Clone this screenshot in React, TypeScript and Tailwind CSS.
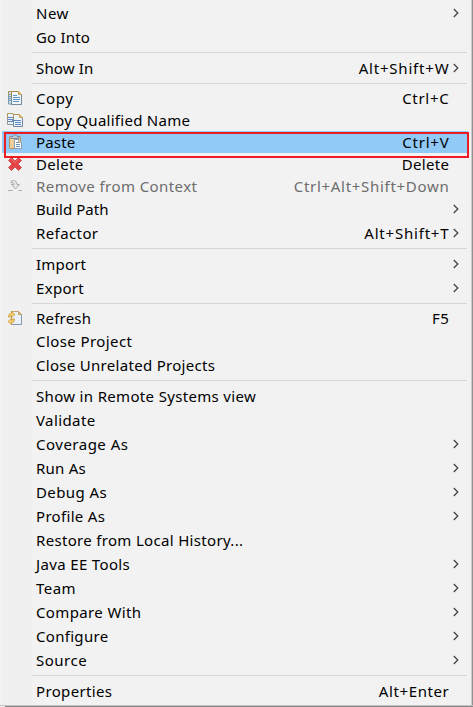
import type { ReactNode } from "react";

type Item = {
  label?: string;
  keys?: string;
  // letter spacing of the label and of the shortcut, in pixels
  ls?: number;
  ks?: number;
  sub?: boolean;
  icon?: ReactNode;
  short?: boolean;
  disabled?: boolean;
  active?: boolean;
  sep?: boolean;
};

const CopyIcon = () => (
  <svg width="16" height="16" viewBox="0 0 16 16" className="block">
    <path d="M1.500 1.500H6V14H1.500z" fill="#cfe0ee" stroke="#7f98a8" />
    <path d="M1.500 5V1.500H5" fill="none" stroke="#ab9458" />
    <path d="M2 4.500h3m-3 2h3m-3 2h3m-3 2h3" stroke="#6d9fc5" />
    <path d="M4.500 1.500h7l3 3v10h-10z" fill="#eef5fb" stroke="#71899c" />
    <path d="M4.500 8V1.500h7" fill="none" stroke="#a88b4a" />
    <path d="M11.500 1.500v3h3z" fill="#e7c66f" stroke="#c7a555" />
    <path d="M6 5.500h4M6 7.500h7M6 9.500h7M6 11.500h6" stroke="#5f94bd" />
  </svg>
);

const CopyNameIcon = () => (
  <svg width="16" height="16" viewBox="0 0 16 16" className="block">
    <path d="M.5 1.500H6l2 2v9H.5z" fill="#eaf2fa" stroke="#8f98a0" />
    <path d="M.5 6V1.500H6" fill="none" stroke="#b09a60" />
    <path d="M1 5.500h5m-5 2h5m-5 2h5" stroke="#6187bd" />
    <path d="M6.500 2.500h6l3 3v9h-9z" fill="#eaf2fa" stroke="#7388a6" />
    <path d="M6.500 7V2.500h6" fill="none" stroke="#b0934e" />
    <path d="M12.500 2.500v3h3z" fill="#edcf7b" stroke="#c9a858" />
    <path d="M5 8.500h9M8 10.500h6m-6 2h6" stroke="#6187bd" />
  </svg>
);

const PasteIcon = () => (
  <svg width="16" height="16" viewBox="0 0 16 16" className="block">
    <rect x="2.500" y="2.500" width="11" height="12" rx="1" fill="#efcf9c" stroke="#b58d54" />
    <path d="M4 4.500v-2h2C6 .3 10 .3 10 2.500h2v2z" fill="#c3cad6" stroke="#7f8ba4" />
    <path d="M7.500 5.500h4l3 3v6h-7z" fill="#fff" stroke="#8b9bb0" />
    <path d="M11.500 5.500v3h3" fill="#eee2c3" stroke="#a99f89" />
    <path d="M9 8.500h2m-2 2h4m-4 2h4" stroke="#668fc1" />
  </svg>
);

const DeleteIcon = () => (
  <svg width="16" height="16" viewBox="0 0 16 16" className="block">
    <path d="M4.500 1.500 8 5l3.500-3.500 3 3L11 8l3.500 3.500-3 3L8 11l-3.500 3.500-3-3L5 8 1.500 4.500z" fill="#e44348" stroke="#ce5558" strokeLinejoin="round" />
    <path d="m4.500 3 3.500 3.500L11.500 3" fill="none" stroke="#f2777a" />
  </svg>
);

const RemoveIcon = () => (
  <svg width="16" height="16" viewBox="0 0 16 16" className="block">
    <path d="M4 3.500C6 1.500 10 2.500 10 6.500h2.500L8.500 11l-4-4.500H7c0-2-1.500-2.500-3-1.500z" fill="#e6e6e6" stroke="#a6a6a6" strokeWidth=".9" />
    <path d="M1 12.500h4.500m6 0H15" stroke="#adadad" />
  </svg>
);

const RefreshIcon = () => (
  <svg width="16" height="16" viewBox="0 0 16 16" className="block">
    <path d="M4.500 1.500h7l3 3v10h-10z" fill="#eaf1fa" stroke="#8496b0" />
    <path d="M4.500 4V1.500h7" fill="none" stroke="#bda56c" />
    <path d="M11.500 1.500v3h3z" fill="#e5c277" stroke="#c3a15c" />
    <path d="M1.500 7c0-3 1-3.500 3-3.500v-2l3.500 3-3.500 3v-2c-1 0-1 .5-1 1.500zM7.500 9c0 3-1 3.500-3 3.500v2l-3.500-3 3.500-3v2c1 0 1-.5 1-1.500z" fill="#f6d678" stroke="#cf9730" strokeWidth=".8" />
  </svg>
);

const items: Item[] = [
  { label: "New", ls: 0.5, sub: true },
  { label: "Go Into", ls: 0.2 },
  { sep: true },
  { label: "Show In", ls: 0.15, keys: "Alt+Shift+W", ks: 0.8, sub: true },
  { sep: true },
  { label: "Copy", ls: 0.6, keys: "Ctrl+C", ks: 0.7, icon: <CopyIcon />, short: true },
  { label: "Copy Qualified Name", ls: 0.27, icon: <CopyNameIcon />, short: true },
  { label: "Paste", ls: 0.15, keys: "Ctrl+V", ks: 0.75, icon: <PasteIcon />, short: true, active: true },
  { label: "Delete", ls: 0.3, keys: "Delete", ks: 0.35, icon: <DeleteIcon />, short: true },
  { label: "Remove from Context", ls: 0.42, keys: "Ctrl+Alt+Shift+Down", ks: 0.7, icon: <RemoveIcon />, short: true, disabled: true },
  { label: "Build Path", ls: 0.05, sub: true },
  { label: "Refactor", ls: 0.4, keys: "Alt+Shift+T", ks: 0.8, sub: true },
  { sep: true },
  { label: "Import", ls: 0.2, sub: true },
  { label: "Export", ls: 0.3, sub: true },
  { sep: true },
  { label: "Refresh", ls: 0.2, keys: "F5", ks: 0.5, icon: <RefreshIcon />, short: true },
  { label: "Close Project", ls: 0.42 },
  { label: "Close Unrelated Projects", ls: 0.3 },
  { sep: true },
  { label: "Show in Remote Systems view", ls: 0.33 },
  { label: "Validate", ls: 0.4 },
  { label: "Coverage As", ls: 0.5, sub: true },
  { label: "Run As", ls: 0.25, sub: true },
  { label: "Debug As", ls: 0.4, sub: true },
  { label: "Profile As", ls: 0.32, sub: true },
  { label: "Restore from Local History...", ls: 0.32 },
  { label: "Java EE Tools", ls: 0.35, sub: true },
  { label: "Team", ls: 0.45, sub: true },
  { label: "Compare With", ls: 0.37, sub: true },
  { label: "Configure", ls: 0.3, sub: true },
  { label: "Source", ls: 0.5, sub: true },
  { sep: true },
  { label: "Properties", ls: 0.34, keys: "Alt+Enter", ks: 0.6 },
];

function Row({ item }: { item: Item }) {
  if (item.sep) {
    return (
      <div className="flex h-[7px] items-center pl-[30px] pr-px">
        <div className="h-px w-full bg-[#d7d7d7]" />
      </div>
    );
  }
  return (
    <div
      className={`relative flex items-center pl-[5px] ${item.short ? "h-[22px]" : "h-6"} ${item.active ? "bg-[#91c9f7]" : ""} ${item.disabled ? "text-[#6d6d6d]" : "text-black"}`}
    >
      <div className="w-[29px] shrink-0">{item.icon}</div>
      <span className="flex-1 whitespace-pre" style={{ letterSpacing: item.ls }}>
        {item.label}
      </span>
      <span className="-mr-[1.4px] whitespace-pre" style={{ letterSpacing: item.ks }}>
        {item.keys}
      </span>
      <div className="flex w-5 shrink-0 justify-end pr-[8.600px]">
        {item.sub && (
          <svg width="6" height="10" viewBox="0 0 6 10" className="block">
            <path d="m.8 1 4 4-4 4" fill="none" stroke="#444" strokeWidth="1.300" />
          </svg>
        )}
      </div>
      {item.active && (
        <div className="pointer-events-none absolute left-[2px] -right-px top-px z-10 h-[26px] border-2 border-[#ec1c24]" />
      )}
    </div>
  );
}

export default function App() {
  return (
    <div className="flex h-[707px] w-[473px] flex-col overflow-hidden bg-[#f2f2f2] font-['Noto_Sans',sans-serif] text-[15px] leading-[22px]">
      <div className="flex h-[705px] shrink-0">
        <div className="w-[469px] bg-[linear-gradient(to_right,#f2f2f2_2px,#f0f0f0_2px,#f0f0f0_32px,#f2f2f2_32px)] pl-[2px] pr-px pt-px">
          {items.map((item, i) => (
            <Row key={i} item={item} />
          ))}
        </div>
        <div className="w-[2px]" />
        <div className="w-px bg-[#cccccc]" />
        <div className="w-px bg-[#909090]" />
      </div>
      <div className="h-px bg-[#c5c5c5]" />
      <div className="ml-[5px] h-px bg-[#858585]" />
    </div>
  );
}
